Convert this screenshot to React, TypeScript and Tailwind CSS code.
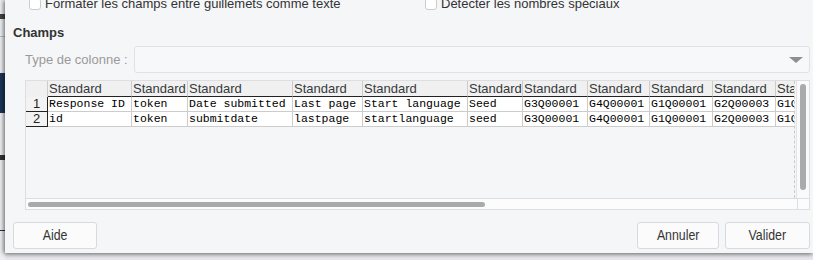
import React from 'react'

const cols = [84, 56, 105, 70, 105, 55, 65, 62, 63, 63, 70]

const rows = [
  ['Response ID', 'token', 'Date submitted', 'Last page', 'Start language', 'Seed', 'G3Q00001', 'G4Q00001', 'G1Q00001', 'G2Q00003', 'G1Q00002'],
  ['id', 'token', 'submitdate', 'lastpage', 'startlanguage', 'seed', 'G3Q00001', 'G4Q00001', 'G1Q00001', 'G2Q00003', 'G1Q00002'],
]

const sans = "font-['Liberation_Sans',Arial,sans-serif]"

function Checkbox({ label }: { label: string }) {
  return (
    <div className="flex items-center gap-1">
      <span className="h-[12px] w-[12px] rounded-[3px] border border-[#c9ccd2] bg-white" />
      <span className="text-[13px] text-[#333]">{label}</span>
    </div>
  )
}

function Button({ children, className = '' }: { children: React.ReactNode; className?: string }) {
  return (
    <button
      className={`flex h-[27px] items-center justify-center rounded-[3px] border border-[#d7dae0] bg-[#fbfbfc] text-[14px] text-[#333] ${className}`}
    >
      <span className="inline-block scale-x-[0.88]">{children}</span>
    </button>
  )
}

export default function App() {
  return (
    <div className={`flex h-[260px] w-[813px] overflow-hidden bg-[#e6e8eb] ${sans}`}>
      {/* page behind the dialog */}
      <div className="flex w-[5px] shrink-0 flex-col bg-[#eceef1]">
        <div className="mt-[14px] h-[5px] bg-[#444]" />
        <div className="mt-[17px] h-px bg-[#b8bcc2]" />
        <div className="mt-[36px] h-[40px] bg-[#1d3557]" />
        <div className="mt-[42px] h-[5px] bg-[#333]" />
        <div className="mt-[70px] h-px bg-[#1d3557]" />
      </div>

      <div className="flex h-[253px] flex-1 flex-col bg-[#f5f6f8] pl-2 pr-[3px] shadow-[-2px_0_4px_rgba(0,0,0,0.35),0_2px_4px_rgba(0,0,0,0.3)]">
        <div className="-mt-[7px] flex h-[22px] items-center">
          <div className="ml-[16px] w-[396px]">
            <Checkbox label="Formater les champs entre guillemets comme texte" />
          </div>
          <Checkbox label="Détecter les nombres spéciaux" />
        </div>

        <div className="mt-[10px] text-[13px] font-bold leading-4 text-[#333]">Champs</div>

        <div className="mt-[5px] flex h-[27px] items-center">
          <span className="ml-[12px] w-[109px] text-[13px] text-[#9a9a9a]">Type de colonne :</span>
          <div className="flex h-full flex-1 items-center justify-end rounded-[3px] border border-[#e0e2e7] bg-[#f7f8fa] pr-[6px]">
            <span className="h-0 w-0 border-x-[7px] border-t-[6px] border-x-transparent border-t-[#8e8f91]" />
          </div>
        </div>

        <div className="ml-[12px] mt-[7px] flex h-[130px] flex-col border border-[#dcdee2]">
          <div className="flex min-h-0 flex-1">
            <div className="w-[769px] overflow-hidden border-r border-dashed border-[#c8cacd]">
              <div className="flex h-[16px] w-max">
                <div className="h-full w-[22px] border-r border-[#ccc] bg-[#f0f0f0]" />
                {cols.map((w, i) => (
                  <div
                    key={i}
                    style={{ width: w }}
                    className="h-full shrink-0 border-r border-b border-r-[#ccc] border-b-[#222] bg-[#f0f0f0] pl-px text-[13px] leading-[15px] text-[#373a3c]"
                  >
                    Standard
                  </div>
                ))}
              </div>
              {rows.map((r, ri) => (
                <div key={ri} className="flex h-[15px] w-max">
                  <div className="h-full w-[22px] border-r border-b border-[#222] bg-[#f3f3f3] text-center text-[13px] leading-[14px] text-[#222]">
                    {ri + 1}
                  </div>
                  {r.map((c, ci) => (
                    <div
                      key={ci}
                      style={{ width: cols[ci] }}
                      className="h-full shrink-0 overflow-hidden whitespace-nowrap border-r border-b border-[#ccc] bg-white pl-px font-['Liberation_Mono',monospace] text-[11.5px] leading-[14px] text-black"
                    >
                      {c}
                    </div>
                  ))}
                </div>
              ))}
            </div>
            <div className="ml-px flex w-[13px] justify-center border-l border-[#e3e4e7] bg-[#fafafa] pt-[3px]">
              <div className="h-[106px] w-[6px] rounded-full bg-[#a9aaac]" />
            </div>
          </div>
          <div className="flex h-[11px] border-t border-[#dcdee2]">
            <div className="flex w-[771px] items-center bg-[#fcfcfd] pl-[2px]">
              <div className="h-[5px] w-[457px] rounded-full bg-[#a9aaac]" />
            </div>
            <div className="flex-1 border-l border-[#dcdee2] bg-[#fcfcfd]" />
          </div>
        </div>

        <div className="mt-[12px] flex">
          <Button className="w-[84px]">Aide</Button>
          <Button className="ml-auto w-[82px]">Annuler</Button>
          <Button className="ml-[6px] w-[85px]">Valider</Button>
        </div>
      </div>
    </div>
  )
}
